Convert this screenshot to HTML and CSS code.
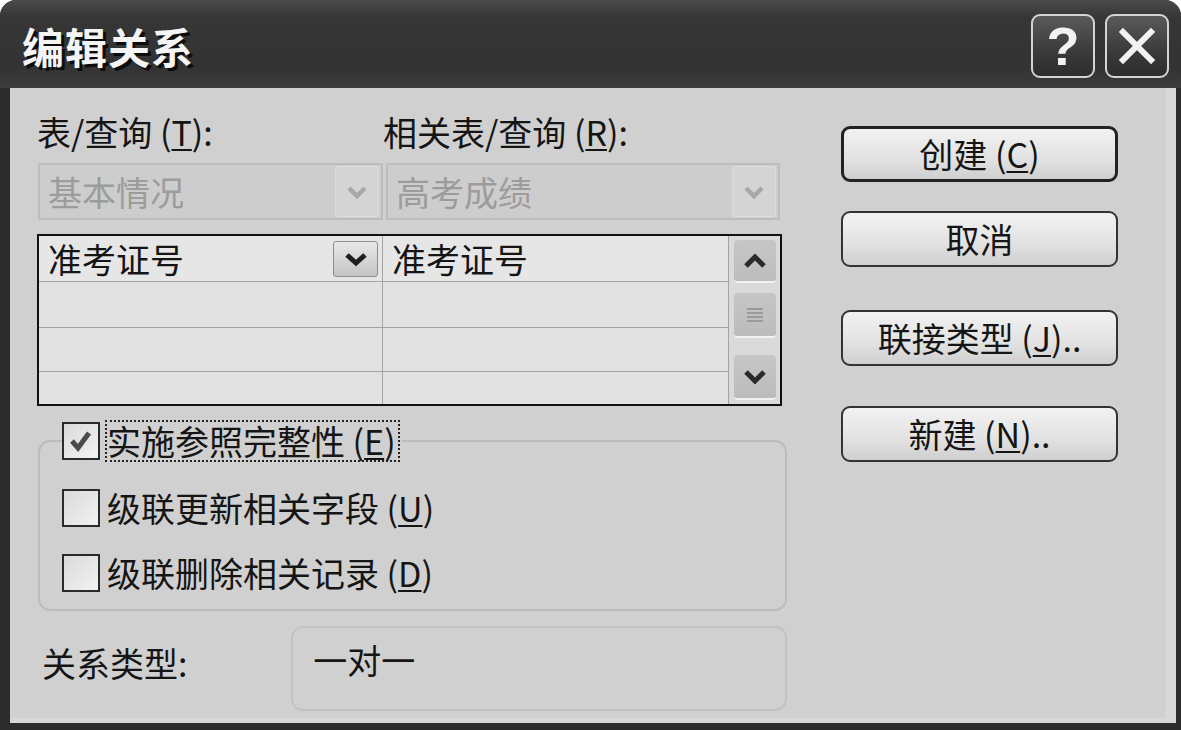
FILE: index.html
```html
<!DOCTYPE html>
<html lang="zh-CN">
<head>
    <meta charset="UTF-8">
    <title>编辑关系</title>
    <link rel="stylesheet" href="styles.css">
</head>
<body>
    <div class="window">
        <div class="titlebar">
            <span class="title">编辑关系</span>
            <div class="caption-buttons">
                <span class="cap-btn help">?</span>
                <span class="cap-btn">
                    <svg width="40" height="40" viewBox="0 0 40 40"><path d="M6 6 L34 34 M34 6 L6 34" stroke="#f2f2f2" stroke-width="6" stroke-linecap="square"/></svg>
                </span>
            </div>
        </div>

        <div class="client">
            <div class="left-col">
                <div class="labels-row">
                    <span class="label-left">表/查询 (<u>T</u>):</span>
                    <span>相关表/查询 (<u>R</u>):</span>
                </div>

                <div class="combo-row">
                    <div class="combo combo-left">
                        <span class="combo-text">基本情况</span>
                        <span class="combo-btn">
                            <svg width="24" height="16" viewBox="0 0 24 16"><path d="M4 4 L12 12 L20 4" fill="none" stroke="#a8a8a8" stroke-width="4.5"/></svg>
                        </span>
                    </div>
                    <div class="combo combo-right">
                        <span class="combo-text">高考成绩</span>
                        <span class="combo-btn">
                            <svg width="24" height="16" viewBox="0 0 24 16"><path d="M4 4 L12 12 L20 4" fill="none" stroke="#a8a8a8" stroke-width="4.5"/></svg>
                        </span>
                    </div>
                </div>

                <div class="fields">
                    <div class="fields-grid">
                        <div class="cell head">
                            <span>准考证号</span>
                            <span class="cell-drop">
                                <svg width="26" height="18" viewBox="0 0 26 18"><path d="M4 5 L13 13 L22 5" fill="none" stroke="#1e1e1e" stroke-width="5"/></svg>
                            </span>
                        </div>
                        <div class="cell head">准考证号</div>
                        <div class="cell"></div>
                        <div class="cell"></div>
                        <div class="cell"></div>
                        <div class="cell"></div>
                        <div class="cell"></div>
                        <div class="cell"></div>
                    </div>
                    <div class="scrollbar">
                        <span class="sb-btn">
                            <svg width="28" height="18" viewBox="0 0 28 18"><path d="M5 14 L14 5 L23 14" fill="none" stroke="#2a2a2a" stroke-width="5"/></svg>
                        </span>
                        <span class="sb-btn sb-thumb">
                            <svg width="20" height="18" viewBox="0 0 20 18"><path d="M2 3 H18 M2 7 H18 M2 11 H18 M2 15 H18" stroke="#9a9a9a" stroke-width="2"/></svg>
                        </span>
                        <span class="sb-btn sb-down">
                            <svg width="28" height="18" viewBox="0 0 28 18"><path d="M5 4 L14 13 L23 4" fill="none" stroke="#2a2a2a" stroke-width="5"/></svg>
                        </span>
                    </div>
                </div>

                <fieldset class="options">
                    <legend class="option">
                        <span class="check">
                            <svg width="26" height="26" viewBox="0 0 26 26"><path d="M4 13 L10 20 L21 5" fill="none" stroke="#4a4a4a" stroke-width="5"/></svg>
                        </span>
                        <span class="focus-label">实施参照完整性 (<u>E</u>)</span>
                    </legend>
                    <div class="option">
                        <span class="check"></span>
                        <span>级联更新相关字段 (<u>U</u>)</span>
                    </div>
                    <div class="option">
                        <span class="check"></span>
                        <span>级联删除相关记录 (<u>D</u>)</span>
                    </div>
                </fieldset>

                <div class="relation-row">
                    <span class="relation-label">关系类型:</span>
                    <div class="relation-box">一对一</div>
                </div>
            </div>

            <div class="right-col">
                <button class="btn default">创建 (<u>C</u>)</button>
                <button class="btn btn-cancel">取消</button>
                <button class="btn btn-join">联接类型 (<u>J</u>)..</button>
                <button class="btn btn-new">新建 (<u>N</u>)..</button>
            </div>
        </div>
    </div>
</body>
</html>
```

FILE: styles.css
```css
body {
    margin: 0;
    background-color: #ffffff;
    font-family: "Noto Sans CJK SC", sans-serif;
    color: #151515;
}

u {
    text-decoration-thickness: 2px;
    text-underline-offset: 3px;
}

.window {
    width: 1181px;
    height: 730px;
    background-color: #2c2c2c;
    border-radius: 16px 16px 0 0;
    display: flex;
    flex-direction: column;
    box-sizing: border-box;
}

.titlebar {
    height: 88px;
    display: flex;
    align-items: center;
    justify-content: space-between;
    padding: 0 12px 0 22px;
    background: linear-gradient(#4a4a4a, #363636 20%, #333333 75%, #3c3c3c);
    border-radius: 16px 16px 0 0;
    flex-shrink: 0;
}

.title {
    color: #f4f4f4;
    font-size: 42px;
    font-weight: bold;
    letter-spacing: 1px;
    text-shadow: 3px 3px 0 #0c0c0c;
    margin-top: 2px;
}

.caption-buttons {
    display: flex;
    gap: 10px;
    margin-top: 4px;
}

.cap-btn {
    width: 60px;
    height: 60px;
    border: 2px solid #d4d4d4;
    border-radius: 9px;
    background: linear-gradient(#5a5a5a, #3a3a3a 60%, #2e2e2e);
    color: #f2f2f2;
    display: flex;
    align-items: center;
    justify-content: center;
}

.cap-btn.help {
    font-family: "Liberation Sans", sans-serif;
    font-size: 54px;
    font-weight: bold;
}

.client {
    flex: 1;
    margin: 0 5px 7px 10px;
    background-color: #d0d0d0;
    box-shadow: inset -10px -5px 0 #d8d8d8;
    display: flex;
    gap: 54px;
    padding: 24px 0 0 27px;
    font-size: 34px;
}

.left-col {
    width: 750px;
    display: flex;
    flex-direction: column;
}

.labels-row {
    display: flex;
    height: 40px;
    line-height: 40px;
    margin-bottom: 11px;
}

.label-left {
    width: 346px;
}

.combo-row {
    display: flex;
    gap: 3px;
    height: 57px;
    margin-left: 1px;
    margin-bottom: 14px;
}

.combo {
    display: flex;
    align-items: center;
    justify-content: space-between;
    border: 2px solid #bdbdbd;
    background-color: #cdcdcd;
    box-sizing: border-box;
    padding: 0 2px 0 8px;
}

.combo-left {
    width: 345px;
}

.combo-right {
    width: 394px;
}

.combo-text {
    color: #9c9c9c;
}

.combo-btn {
    width: 44px;
    height: 51px;
    box-sizing: border-box;
    border: 1px solid #dedede;
    border-radius: 3px;
    background-color: #d4d4d4;
    display: flex;
    align-items: center;
    justify-content: center;
}

.fields {
    width: 745px;
    height: 172px;
    box-sizing: border-box;
    border: 2px solid #111111;
    display: flex;
    margin-bottom: 15px;
}

.fields-grid {
    flex: 1;
    display: grid;
    grid-template-columns: 343px 1fr;
    grid-template-rows: 45px 45px 43px 1fr;
    gap: 1px;
    background-color: #a3a3a3;
}

.cell {
    background-color: #e2e2e2;
    line-height: 42px;
    padding-left: 9px;
}

.cell.head {
    background-color: #e6e6e6;
    display: flex;
    align-items: center;
    justify-content: space-between;
    padding-right: 4px;
}

.cell-drop {
    width: 45px;
    height: 36px;
    box-sizing: border-box;
    border: 1px solid #8e8e8e;
    border-radius: 3px;
    background: linear-gradient(#e8e8e8, #c4c4c4);
    display: flex;
    align-items: center;
    justify-content: center;
}

.scrollbar {
    width: 52px;
    border-left: 1px solid #a3a3a3;
    background-color: #dadada;
    display: flex;
    flex-direction: column;
    align-items: center;
    padding-top: 4px;
    box-sizing: border-box;
}

.sb-btn {
    width: 42px;
    height: 43px;
    box-sizing: border-box;
    border-radius: 4px;
    border-bottom: 2px solid #f2f2f2;
    background: linear-gradient(#c6c6c6, #bcbcbc);
    display: flex;
    align-items: center;
    justify-content: center;
}

.sb-thumb {
    margin-top: 10px;
    height: 45px;
}

.sb-down {
    margin-top: 17px;
    height: 45px;
}

.options {
    margin: 0 0 15px 1px;
    padding: 0 20px 16px 22px;
    border: 2px solid #bcbcbc;
    border-radius: 12px;
    min-width: 0;
    width: 749px;
    box-sizing: border-box;
}

.option {
    display: flex;
    align-items: center;
    gap: 7px;
    height: 40px;
    line-height: 40px;
    padding: 0;
}

legend.option {
    padding: 0 4px 0 0;
}

fieldset .option + .option {
    margin-top: 25px;
}

div.option:first-of-type {
    margin-top: 27px;
}

.check {
    width: 38px;
    height: 38px;
    box-sizing: border-box;
    border: 2px solid #2a2a2a;
    background: linear-gradient(135deg, #dadada, #f2f2f2);
    display: flex;
    align-items: center;
    justify-content: center;
    flex-shrink: 0;
}

.focus-label {
    outline: 2px dotted #222222;
    outline-offset: 0;
    line-height: 38px;
    padding-right: 2px;
}

.relation-row {
    display: flex;
    align-items: flex-start;
    height: 85px;
}

.relation-label {
    width: 251px;
    padding-left: 5px;
    margin-top: 17px;
    line-height: 40px;
}

.relation-box {
    width: 499px;
    height: 85px;
    box-sizing: border-box;
    border: 2px solid #c2c2c2;
    border-radius: 12px;
    padding: 12px 0 0 20px;
    line-height: 40px;
}

.right-col {
    width: 277px;
    display: flex;
    flex-direction: column;
    padding-top: 14px;
}

.btn {
    font-family: "Noto Sans CJK SC", sans-serif;
    font-size: 34px;
    color: #151515;
    height: 56px;
    padding: 0;
    border: 2px solid #333333;
    border-radius: 9px;
    background: linear-gradient(#f2f2f2, #e2e2e2 60%, #cfcfcf);
    line-height: 50px;
}

.btn.default {
    border-width: 3px;
    border-color: #222222;
}

.btn-cancel {
    margin-top: 29px;
}

.btn-join {
    margin-top: 43px;
}

.btn-new {
    margin-top: 40px;
}
```
